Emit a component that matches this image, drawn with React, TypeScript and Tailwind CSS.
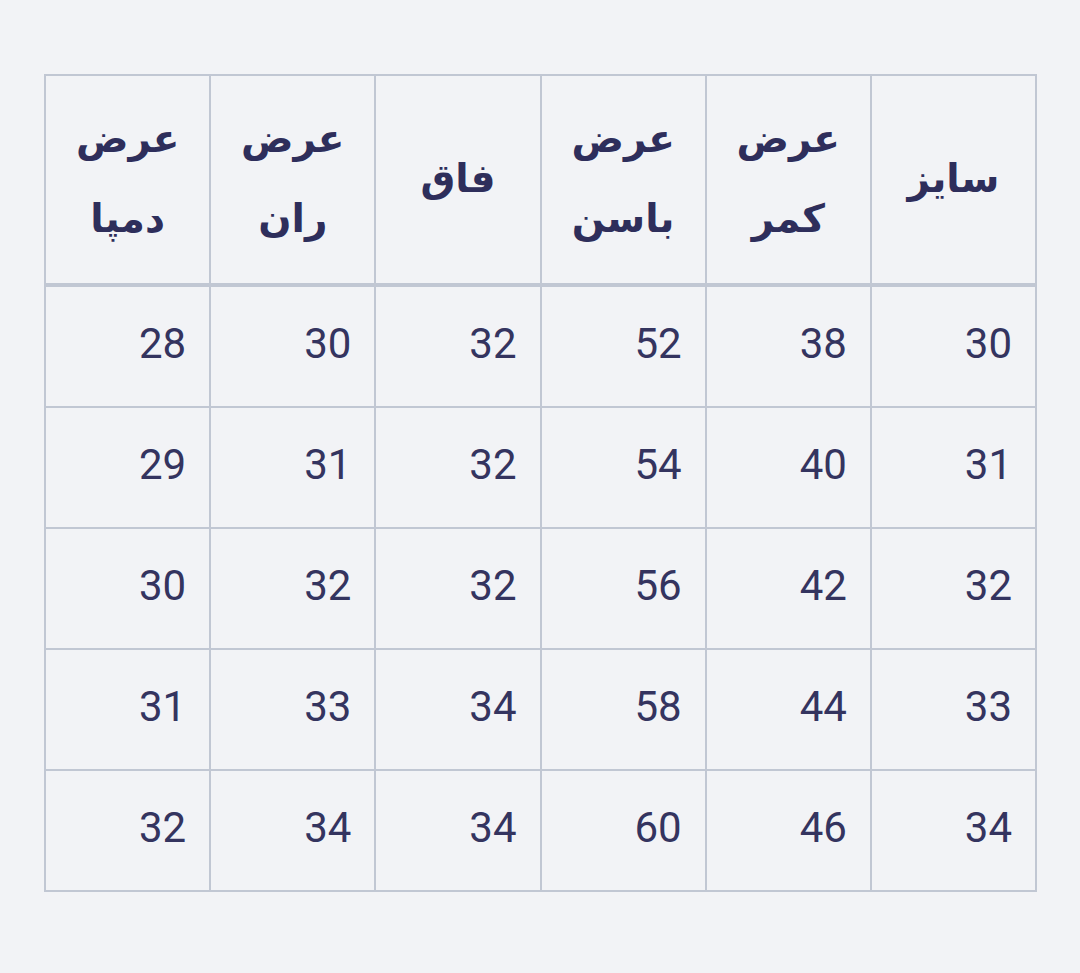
import React from "react";

const headers: string[][] = [
  ["سایز"],
  ["عرض", "کمر"],
  ["عرض", "باسن"],
  ["فاق"],
  ["عرض", "ران"],
  ["عرض", "دمپا"],
];

const rows: number[][] = [
  [30, 38, 52, 32, 30, 28],
  [31, 40, 54, 32, 31, 29],
  [32, 42, 56, 32, 32, 30],
  [33, 44, 58, 34, 33, 31],
  [34, 46, 60, 34, 34, 32],
];

export default function App() {
  return (
    <div className="min-h-[973px] w-[1080px] bg-[#f2f3f6] pt-[74px] pl-[44px] pr-[43px]">
      <table
        dir="rtl"
        className="w-[993px] table-fixed border-collapse text-[#34345f]"
      >
        <thead>
          <tr>
            {headers.map((h, i) => (
              <th
                key={i}
                className="border-2 border-b-4 border-[#c1c7d3] px-2 pt-[23px] pb-[24px] text-center align-middle text-[39px] font-bold leading-[80px] text-[#2e2e5b]"
                style={{ fontFamily: '"DejaVu Sans", sans-serif' }}
              >
                {h.map((line, j) => (
                  <div key={j}>{line}</div>
                ))}
              </th>
            ))}
          </tr>
        </thead>
        <tbody>
          {rows.map((r, i) => (
            <tr key={i}>
              {r.map((v, j) => (
                <td
                  key={j}
                  className="border-2 border-[#c1c7d3] pt-[25px] pb-[31px] pr-[23px] text-right align-middle text-[42px] leading-[63px]"
                  style={{ fontFamily: 'Roboto, sans-serif' }}
                >
                  {v}
                </td>
              ))}
            </tr>
          ))}
        </tbody>
      </table>
    </div>
  );
}
